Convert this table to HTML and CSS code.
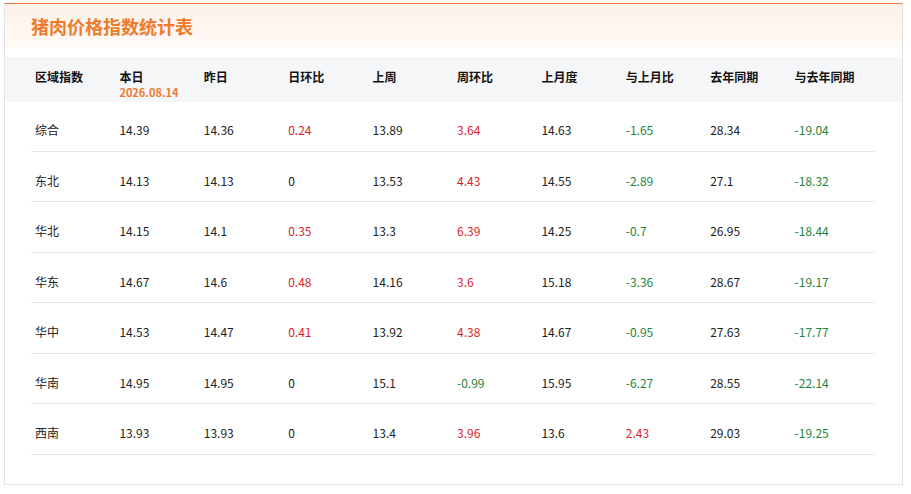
FILE: index.html
```html
<!DOCTYPE html>
<html lang="zh-CN">
<head>
<meta charset="utf-8">
<title>猪肉价格指数统计表</title>
<link rel="stylesheet" href="styles.css">
</head>
<body>
<div class="panel">
  <div class="panel-head"><h1 class="title">猪肉价格指数统计表</h1></div>
  <div class="thead">
    <div class="row head-row">
      <div class="cell">区域指数</div>
      <div class="cell">本日<div class="date">2026.08.14</div></div>
      <div class="cell">昨日</div>
      <div class="cell">日环比</div>
      <div class="cell">上周</div>
      <div class="cell">周环比</div>
      <div class="cell">上月度</div>
      <div class="cell">与上月比</div>
      <div class="cell">去年同期</div>
      <div class="cell">与去年同期</div>
    </div>
  </div>
  <div class="tbody">
    <div class="row body-row">
      <div class="cell">综合</div><div class="cell">14.39</div><div class="cell">14.36</div><div class="cell up">0.24</div><div class="cell">13.89</div><div class="cell up">3.64</div><div class="cell">14.63</div><div class="cell down">-1.65</div><div class="cell">28.34</div><div class="cell down">-19.04</div>
    </div>
    <div class="row body-row">
      <div class="cell">东北</div><div class="cell">14.13</div><div class="cell">14.13</div><div class="cell">0</div><div class="cell">13.53</div><div class="cell up">4.43</div><div class="cell">14.55</div><div class="cell down">-2.89</div><div class="cell">27.1</div><div class="cell down">-18.32</div>
    </div>
    <div class="row body-row">
      <div class="cell">华北</div><div class="cell">14.15</div><div class="cell">14.1</div><div class="cell up">0.35</div><div class="cell">13.3</div><div class="cell up">6.39</div><div class="cell">14.25</div><div class="cell down">-0.7</div><div class="cell">26.95</div><div class="cell down">-18.44</div>
    </div>
    <div class="row body-row">
      <div class="cell">华东</div><div class="cell">14.67</div><div class="cell">14.6</div><div class="cell up">0.48</div><div class="cell">14.16</div><div class="cell up">3.6</div><div class="cell">15.18</div><div class="cell down">-3.36</div><div class="cell">28.67</div><div class="cell down">-19.17</div>
    </div>
    <div class="row body-row">
      <div class="cell">华中</div><div class="cell">14.53</div><div class="cell">14.47</div><div class="cell up">0.41</div><div class="cell">13.92</div><div class="cell up">4.38</div><div class="cell">14.67</div><div class="cell down">-0.95</div><div class="cell">27.63</div><div class="cell down">-17.77</div>
    </div>
    <div class="row body-row">
      <div class="cell">华南</div><div class="cell">14.95</div><div class="cell">14.95</div><div class="cell">0</div><div class="cell">15.1</div><div class="cell down">-0.99</div><div class="cell">15.95</div><div class="cell down">-6.27</div><div class="cell">28.55</div><div class="cell down">-22.14</div>
    </div>
    <div class="row body-row">
      <div class="cell">西南</div><div class="cell">13.93</div><div class="cell">13.93</div><div class="cell">0</div><div class="cell">13.4</div><div class="cell up">3.96</div><div class="cell">13.6</div><div class="cell up">2.43</div><div class="cell">29.03</div><div class="cell down">-19.25</div>
    </div>
  </div>
</div>
</body>
</html>
```

FILE: styles.css
```css
* { box-sizing: border-box; }
html, body { margin: 0; padding: 0; background: #fff; }
body {
  font-family: "Noto Sans CJK SC", "Noto Sans", "Liberation Sans", sans-serif;
  color: #222;
  font-size: 12px;
}
.panel {
  margin: 3px 0 0 4px;
  width: 899px;
  height: 482px;
  border: 1px solid #e2e2e2;
  border-top: 1px solid #ec7a3c;
}
.panel-head {
  height: 44px;
  padding-left: 26px;
  background: linear-gradient(to bottom, #fdf1ea, #fffaf6);
  display: flex;
  align-items: center;
}
.title {
  margin: 0;
  font-size: 18px;
  line-height: 24px;
  font-weight: 700;
  color: #f07a2c;
}
.thead {
  margin-top: 9px;
  background: #f4f6f8;
  height: 45px;
}
.row {
  display: grid;
  grid-template-columns: repeat(10, 1fr);
  margin: 0 27px 0 26px;
}
.cell { padding-left: 4px; white-space: nowrap; }
.head-row { padding-top: 12px; }
.head-row .cell {
  font-weight: 700;
  line-height: 16px;
  color: #111;
}
.date {
  font-size: 11px;
  line-height: 14px;
  color: #f07a2c;
  font-weight: 700;
}
.body-row {
  padding: 20px 0 11.5px;
  line-height: 18px;
  border-bottom: 1px solid #e8e8e8;
}
.body-row:first-child { padding-top: 19px; }
.up { color: #d91f2a; }
.down { color: #1e8540; }
```
